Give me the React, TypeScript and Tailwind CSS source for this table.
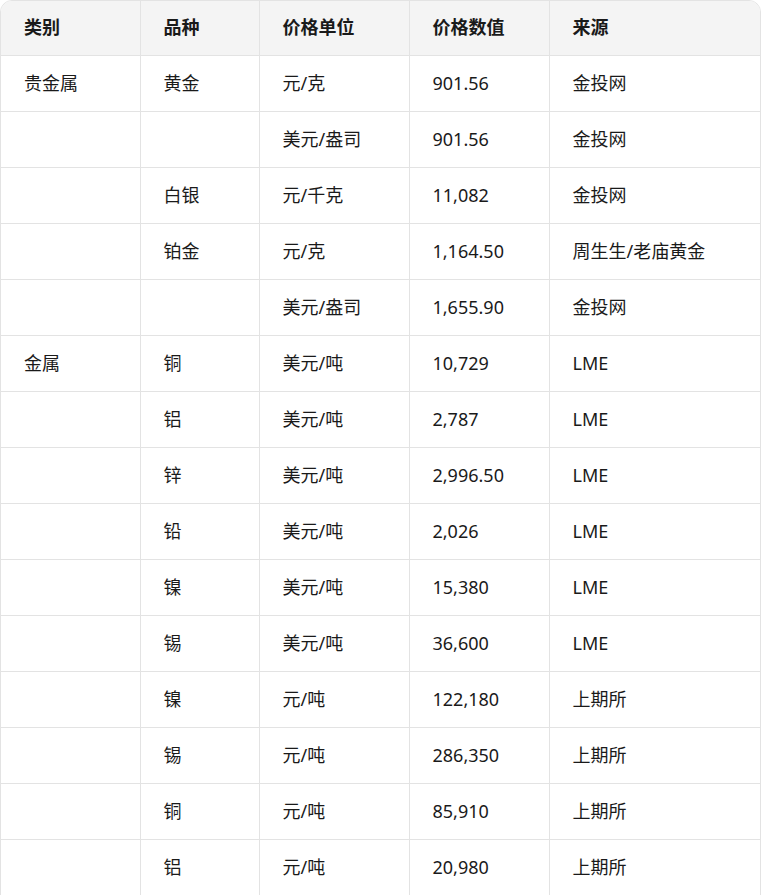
import React from 'react';

const rows = [
  ['贵金属', '黄金', '元/克', '901.56', '金投网'],
  ['', '', '美元/盎司', '901.56', '金投网'],
  ['', '白银', '元/千克', '11,082', '金投网'],
  ['', '铂金', '元/克', '1,164.50', '周生生/老庙黄金'],
  ['', '', '美元/盎司', '1,655.90', '金投网'],
  ['金属', '铜', '美元/吨', '10,729', 'LME'],
  ['', '铝', '美元/吨', '2,787', 'LME'],
  ['', '锌', '美元/吨', '2,996.50', 'LME'],
  ['', '铅', '美元/吨', '2,026', 'LME'],
  ['', '镍', '美元/吨', '15,380', 'LME'],
  ['', '锡', '美元/吨', '36,600', 'LME'],
  ['', '镍', '元/吨', '122,180', '上期所'],
  ['', '锡', '元/吨', '286,350', '上期所'],
  ['', '铜', '元/吨', '85,910', '上期所'],
  ['', '铝', '元/吨', '20,980', '上期所'],
];

const headers = ['类别', '品种', '价格单位', '价格数值', '来源'];
const widths = ['w-[139px]', 'w-[119px]', 'w-[150px]', 'w-[140px]', 'w-auto'];

export default function App() {
  return (
    <div className="w-[761px] bg-white font-['Segoe_UI','Noto_Sans','Noto_Sans_CJK_SC',sans-serif] text-[18px] text-[#1a1a1a]">
      <div className="overflow-hidden rounded-t-xl border border-[#e3e3e3]">
        <table className="w-full table-fixed border-collapse">
          <colgroup>
            {widths.map((w, i) => (
              <col key={i} className={w} />
            ))}
          </colgroup>
          <thead>
            <tr className="bg-[#f4f4f4]">
              {headers.map((h, i) => (
                <th
                  key={i}
                  className="h-[54px] border-b border-l border-[#e3e3e3] px-6 pl-[23px] text-left font-bold first:border-l-0"
                >
                  {h}
                </th>
              ))}
            </tr>
          </thead>
          <tbody>
            {rows.map((r, ri) => (
              <tr key={ri}>
                {r.map((c, ci) => (
                  <td
                    key={ci}
                    className="h-[56px] border-b border-l border-[#e3e3e3] px-6 pl-[23px] first:border-l-0"
                  >
                    {c}
                  </td>
                ))}
              </tr>
            ))}
          </tbody>
        </table>
      </div>
    </div>
  );
}
